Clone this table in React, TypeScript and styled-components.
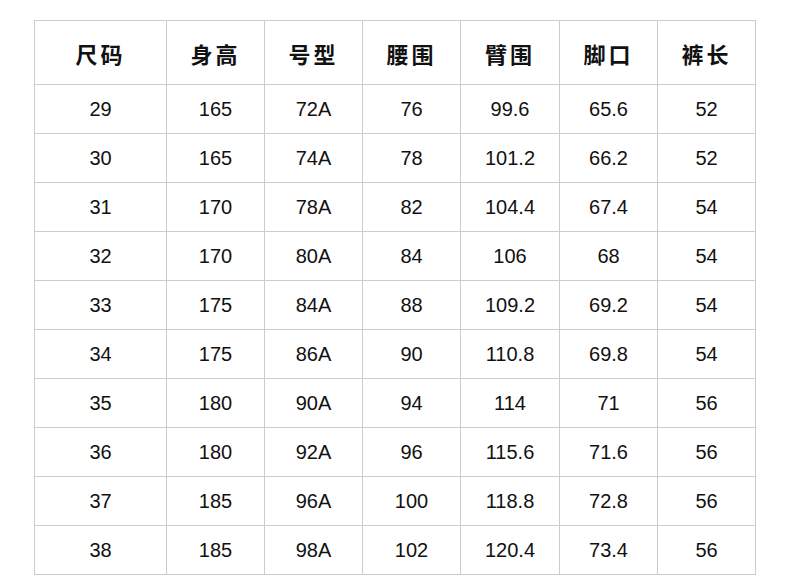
import { FC } from 'react';
import styled, { createGlobalStyle } from 'styled-components';

const GlobalStyle = createGlobalStyle`
  html, body {
    margin: 0;
    padding: 0;
    background: #ffffff;
  }
`;

const COLOR_BORDER = '#cccccc';
const COLOR_TEXT = '#111111';

const StyledPage = styled.div`
  padding: 20px 0 0 34px;
  width: 790px;
  height: 575px;
  box-sizing: border-box;
  overflow: hidden;
`;

const StyledTable = styled.table`
  border-collapse: collapse;
  table-layout: fixed;
  width: 722px;
  color: ${COLOR_TEXT};
`;

// widths are the inner widths, the shared 1px border comes on top
const StyledHeadCell = styled.th<{ width: number }>`
  width: ${({ width }) => width}px;
  height: 63px;
  padding: 0;
  border: 1px solid ${COLOR_BORDER};
  font-family: 'Noto Sans CJK SC', 'Noto Sans', sans-serif;
  font-size: 22px;
  font-weight: 700;
  letter-spacing: 3px;
  text-align: center;
  vertical-align: middle;
`;

const StyledCell = styled.td`
  height: 48px;
  padding: 0;
  border: 1px solid ${COLOR_BORDER};
  font-family: 'Liberation Sans', Arial, sans-serif;
  font-size: 20px;
  text-align: center;
  vertical-align: middle;
`;

const COLUMNS = [
  { title: '尺码', width: 131 },
  { title: '身高', width: 97 },
  { title: '号型', width: 97 },
  { title: '腰围', width: 97 },
  { title: '臂围', width: 98 },
  { title: '脚口', width: 97 },
  { title: '裤长', width: 97 },
];

const ROWS = [
  ['29', '165', '72A', '76', '99.6', '65.6', '52'],
  ['30', '165', '74A', '78', '101.2', '66.2', '52'],
  ['31', '170', '78A', '82', '104.4', '67.4', '54'],
  ['32', '170', '80A', '84', '106', '68', '54'],
  ['33', '175', '84A', '88', '109.2', '69.2', '54'],
  ['34', '175', '86A', '90', '110.8', '69.8', '54'],
  ['35', '180', '90A', '94', '114', '71', '56'],
  ['36', '180', '92A', '96', '115.6', '71.6', '56'],
  ['37', '185', '96A', '100', '118.8', '72.8', '56'],
  ['38', '185', '98A', '102', '120.4', '73.4', '56'],
];

const App: FC = () => {
  return (
    <>
      <GlobalStyle />
      <StyledPage>
        <StyledTable>
          <thead>
            <tr>
              {COLUMNS.map((col) => (
                <StyledHeadCell key={col.title} width={col.width}>
                  {col.title}
                </StyledHeadCell>
              ))}
            </tr>
          </thead>
          <tbody>
            {ROWS.map((row) => (
              <tr key={row[0]}>
                {row.map((value, i) => (
                  <StyledCell key={i}>{value}</StyledCell>
                ))}
              </tr>
            ))}
          </tbody>
        </StyledTable>
      </StyledPage>
    </>
  );
};

export default App;
